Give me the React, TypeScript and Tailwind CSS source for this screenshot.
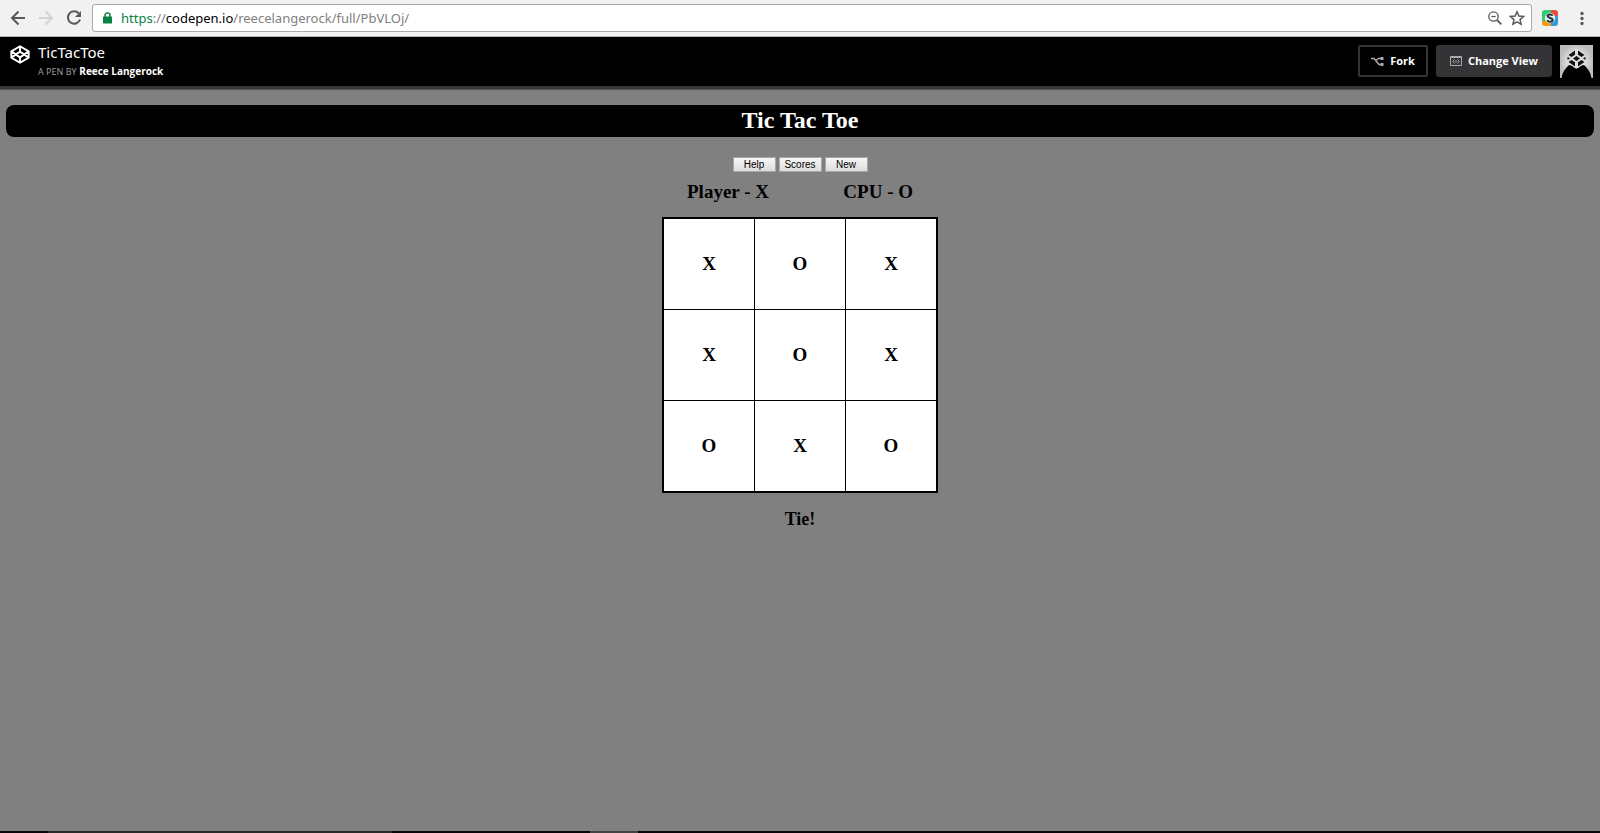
import React from 'react';

const board = [
  ['X', 'O', 'X'],
  ['X', 'O', 'X'],
  ['O', 'X', 'O'],
];

function CubeMark({ className, strokeWidth }: { className: string; strokeWidth: number }) {
  return (
    <svg viewBox="0 0 20 19" className={className} fill="none" stroke="currentColor" strokeWidth={strokeWidth} strokeLinejoin="round" aria-hidden="true">
      <path d="M10 1.2 18.7 6.4V12.6L10 17.8 1.3 12.6V6.4ZM1.3 6.4 10 12.4 18.7 6.4M1.3 12.6 10 6.6 18.7 12.6M10 1.2V6.6M10 12.4V17.8" />
    </svg>
  );
}

function BrowserBar() {
  return (
    <div className="flex h-[37px] items-center border-b border-[#b6b4b6] bg-[#f1f1f1] pl-[10px] text-[#5a5a5a]">
      <div className="flex items-center gap-[10px]">
        <button type="button" aria-label="Back">
          <svg className="block size-[18px]" viewBox="0 0 18 18" fill="none" stroke="currentColor" strokeWidth="2"><path d="M15 9H2.5M8.5 2.5 2 9l6.500 6.500" /></svg>
        </button>
        <button type="button" aria-label="Forward" className="text-[#d2d2d2]">
          <svg className="block size-[18px]" viewBox="0 0 18 18" fill="none" stroke="currentColor" strokeWidth="2"><path d="M1 9H13.500M7.500 2.500 14 9l-6.500 6.500" /></svg>
        </button>
        <button type="button" aria-label="Reload">
          <svg className="block size-[18px]" viewBox="0 0 18 18" fill="none" stroke="currentColor" strokeWidth="2"><path d="M12.700 4.300A6.200 6.200 0 1 0 14 10.500" /><path d="M15 2v6H9z" fill="currentColor" stroke="none" /></svg>
        </button>
      </div>
      <div className="ml-2 flex h-7 min-w-0 flex-1 items-center rounded-[3px] border border-[#a9a9a9] bg-white pr-[6px] pl-[10px]">
        <svg className="h-3 w-[9px] shrink-0" viewBox="0 0 9 12" aria-hidden="true"><path d="M2 5V3a2.500 2 0 0 1 5 0v2" fill="none" stroke="#0b8043" strokeWidth="1.500" /><rect y="4.500" width="9" height="7" rx=".5" fill="#0b8043" /></svg>
        <a href="https://codepen.io/reecelangerock/full/PbVLOj/" className="ml-[9px] flex-1 font-['Noto_Sans',sans-serif] text-[13px] leading-5 text-[#808080]">
          <span className="text-[#0b8043]">https</span>://<span className="text-black">codepen.io</span>/reecelangerock/full/PbVLOj/
        </a>
        <button type="button" aria-label="Zoom">
          <svg className="block size-4" viewBox="0 0 16 16" fill="none" stroke="currentColor"><circle cx="6.500" cy="6.500" r="4.700" strokeWidth="1.300" /><path d="M4.300 6.500h4.400" strokeWidth="1.200" /><path d="m10 10 4.300 4.300" strokeWidth="1.800" /></svg>
        </button>
        <button type="button" aria-label="Bookmark this page" className="ml-[6px]">
          <svg className="block size-4" viewBox="0 0 16 16" fill="none" stroke="currentColor" strokeWidth="1.500"><path d="m8 1.800 1.900 4.300 4.700.4-3.600 3.100 1.100 4.600L8 11.800l-4.100 2.400L5 9.600 1.400 6.500l4.700-.4z" /></svg>
        </button>
      </div>
      <button type="button" aria-label="Extension" className="ml-[10px]">
        <svg className="block size-4" viewBox="0 0 16 16" aria-hidden="true">
          <clipPath id="tile"><rect width="16" height="16" rx="3" /></clipPath>
          <g clipPath="url(#tile)"><path fill="#2ecc71" d="M0 0h9v11H0z" /><path fill="#e74c3c" d="M9 0h7v6H9z" /><path fill="#3498db" d="M9 6h7v10H9z" /><path fill="#f39c12" d="M0 11h9v5H0z" /><circle cx="8" cy="8" r="5.200" fill="#ecf0f1" /></g>
          <path d="M10.700 5.600C9.800 3.900 5.500 4 5.500 6.100c0 2.100 5.200 1.600 5.200 3.900 0 2.100-4.400 2.200-5.500.3" fill="none" stroke="#26323e" strokeWidth="2" />
        </svg>
      </button>
      <button type="button" aria-label="Menu" className="mr-[10px] ml-4">
        <svg className="block size-4" viewBox="0 0 16 16" fill="currentColor"><circle cx="8" cy="3.500" r="1.700" /><circle cx="8" cy="8.500" r="1.700" /><circle cx="8" cy="13.500" r="1.700" /></svg>
      </button>
    </div>
  );
}

function PenHeader() {
  return (
    <header className="flex h-[52px] items-start justify-between border-b-[3px] border-[#38383b] bg-black pr-[7px] pl-[10px] font-['Noto_Sans',sans-serif] text-white shadow-[0_1px_1px_rgba(0,0,0,0.3)]">
      <div className="flex gap-2 pt-[5px]">
        <a href="#home" aria-label="CodePen" className="pt-[3px]"><CubeMark className="h-[19px] w-5" strokeWidth={1.9} /></a>
        <div>
          <h1 className="text-[15px] leading-5">TicTacToe</h1>
          <p className="text-[10px] leading-[18px] text-[#999]"><span className="text-[9px]">A PEN BY</span> <a href="#author" className="font-['Open_Sans',sans-serif] font-bold text-white">Reece Langerock</a></p>
        </div>
      </div>
      <div className="flex items-start gap-2 pt-2 font-['Open_Sans',sans-serif]">
        <button type="button" className="flex h-8 items-center gap-[6px] rounded-[2px] border-2 border-[#343436] px-[11px] text-[11px] font-bold">
          <svg className="h-[11px] w-[13px]" viewBox="0 0 13 11" fill="none" stroke="#aaa" strokeWidth="1.500"><path d="M0 2.500h3l5 6h2.500M5 4.500 7.500 2.500h3" /><path d="M9.500 1h3v3h-3zM9.500 7h3v3h-3z" fill="#aaa" stroke="none" /></svg>
          Fork
        </button>
        <button type="button" className="flex h-8 items-center gap-[6px] rounded-[3px] bg-[#343436] px-[14px] text-[11px] font-bold">
          <svg className="h-[10px] w-3" viewBox="0 0 12 10" fill="none" stroke="#aaa"><path d="M.5.500h11v9H.5zM0 1.500h12M4.500 3.500 2.700 5.500l1.800 2M7.500 3.500l1.800 2-1.800 2" /><circle cx="6" cy="5.500" r=".6" /></svg>
          Change View
        </button>
        <a href="#profile" aria-label="Profile">
          <svg className="block size-[33px]" viewBox="0 0 33 33" aria-hidden="true">
            <defs><radialGradient id="glow"><stop offset=".3" stopColor="#eee" /><stop offset="1" stopColor="#bcbcbc" /></radialGradient></defs>
            <path fill="url(#glow)" d="M0 0h33v33H0z" />
            <path d="M1.500 33c1-6 4-10 7.500-13 3 0 5.500 3.500 7.500 3.500S21 20 24 20c3.500 3 6.500 7 7.500 13z" fill="#000" />
            <path d="M16.500 4 26 10v7l-9.500 6.500L7 17v-7z" fill="#ddd" />
            <path d="M15 5.500 8.500 10l3 2L15 9.700zM18 5.500l6.500 4.500-3 2L18 9.700zM16.500 11l3.500 2.500-3.500 2.500-3.500-2.500zM7.500 11.800V15l2.500-1.600zM25.500 11.800V15L23 13.400zM15 21.500 8.500 17l3-2 3.500 2.300zM18 21.500l6.500-4.500-3-2-3.500 2.300z" fill="#111" />
          </svg>
        </a>
      </div>
    </header>
  );
}

function Game() {
  return (
    <main className="flex flex-1 flex-col items-center px-[6px] pt-4 font-['Liberation_Serif',serif] font-bold text-black">
      <h2 className="w-full rounded-lg bg-black pb-[2px] text-center text-[24px] leading-[30px] text-white">Tic Tac Toe</h2>
      <div className="mt-5 flex gap-[3px] font-['Liberation_Sans',sans-serif] text-[10px] font-normal">
        {['Help', 'Scores', 'New'].map((label) => (
          <button key={label} type="button" className="h-[15px] w-[43px] border border-[#a6a6a6] bg-linear-to-b from-[#f6f6f6] to-[#dddddd] leading-[13px]">{label}</button>
        ))}
      </div>
      <div className="mt-[9px] flex w-[276px] justify-between px-[25px] text-[19px] leading-[22px]">
        <span>Player - X</span>
        <span>CPU - O</span>
      </div>
      <table className="mt-[14px] border-separate border-spacing-0 border-2 border-black bg-white text-center text-[19px] leading-[22px]">
        <tbody>
          {board.map((row, r) => (
            <tr key={r} className="group">
              {row.map((mark, c) => (
                <td key={c} className="size-[91px] border-r border-b border-black p-0 group-last:h-[90px] group-last:border-b-0 last:w-[90px] last:border-r-0">{mark}</td>
              ))}
            </tr>
          ))}
        </tbody>
      </table>
      <p className="mt-[15px] text-[18px] leading-[22px]">Tie!</p>
    </main>
  );
}

export default function App() {
  return (
    <div className="flex min-h-screen flex-col bg-[#808080]">
      <BrowserBar />
      <PenHeader />
      <Game />
      <div className="flex h-[2px] bg-[#080508]" aria-hidden="true">
        <span className="w-[3%] bg-[#080508]" />
        <span className="w-[21.5%] bg-[#292929]" />
        <span className="w-[12.4%] bg-[#080508]" />
        <span className="w-[3%] bg-[#444]" />
      </div>
    </div>
  );
}
